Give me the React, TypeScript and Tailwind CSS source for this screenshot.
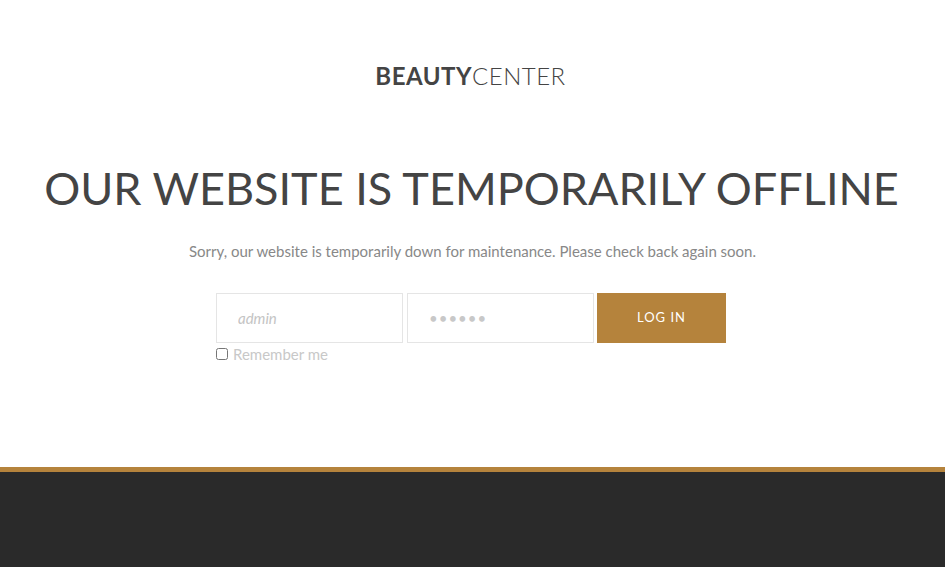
export default function App() {
  return (
    <div className="min-h-screen flex flex-col bg-white font-['Lato',sans-serif]">
      <main className="flex-1 flex flex-col items-center">
        {/* Logo */}
        <div className="pt-[62px] mr-[4px] text-[24px] leading-[28px] text-[#444] tracking-[0.5px]">
          <span className="font-bold">BEAUTY</span>
          <span className="font-light">CENTER</span>
        </div>

        {/* Heading */}
        <h1 className="mt-[70px] mr-[2px] text-[45px] leading-[56px] font-normal text-[#444]">
          OUR WEBSITE IS TEMPORARILY OFFLINE
        </h1>

        <p className="mt-[25px] text-[15px] leading-[20px] text-[#888]">
          Sorry, our website is temporarily down for maintenance. Please check back again soon.
        </p>

        {/* Login form */}
        <div className="mt-[32px] w-[511px] pl-px mr-[4px]">
          <div className="flex">
            <input
              type="text"
              placeholder="admin"
              className="w-[187px] h-[50px] border border-[#e5e5e5] px-[21px] text-[15px] italic placeholder:text-[#c4c4c4] focus:outline-none"
            />
            <input
              type="password"
              placeholder="••••••"
              className="ml-[4px] w-[187px] h-[50px] border border-[#e5e5e5] px-[21px] text-[15px] placeholder:text-[#c8c8c8] placeholder:tracking-[1px] focus:outline-none"
            />
            <button
              type="button"
              className="ml-[3px] w-[129px] h-[50px] bg-[#b5833c] text-white text-[13px] tracking-[1px]"
            >
              LOG IN
            </button>
          </div>
          <label className="mt-0 flex items-center gap-[5px] text-[15px] text-[#c8c8c8]">
            <input type="checkbox" className="w-[12px] h-[12px] m-0" />
            Remember me
          </label>
        </div>
      </main>

      {/* Footer */}
      <footer className="h-[100px] border-t-[5px] border-[#b5833c] bg-[#2a2a2a]" />
    </div>
  );
}
